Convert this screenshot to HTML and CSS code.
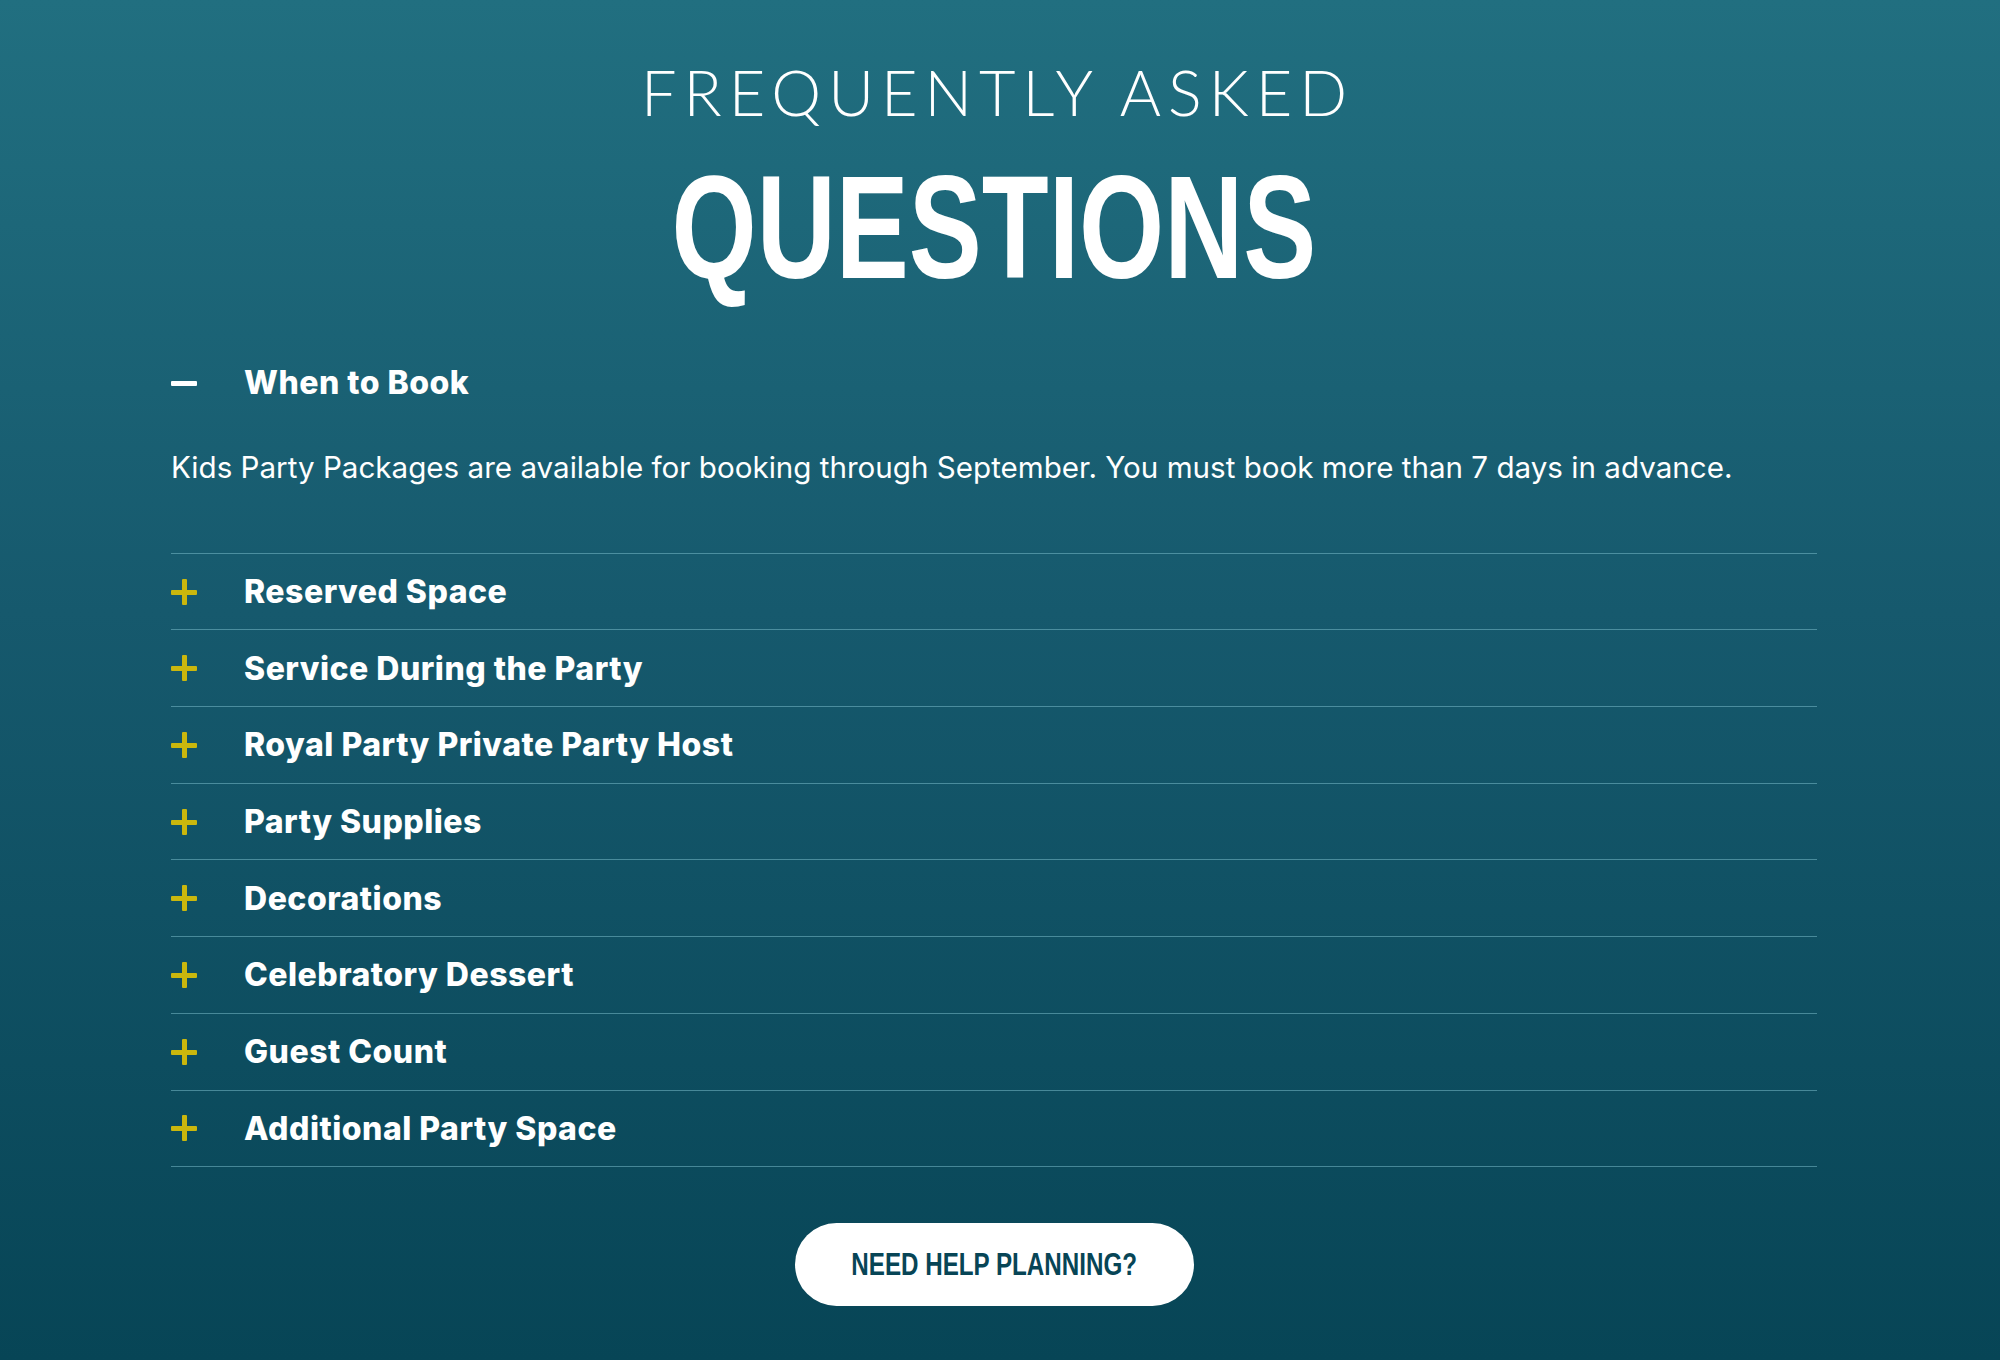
FILE: index.html
```html
<!DOCTYPE html>
<html lang="en">
<head>
    <meta charset="UTF-8">
    <meta name="viewport" content="width=device-width, initial-scale=1.0">
    <title>FAQ</title>
    <link rel="stylesheet" href="styles.css">
</head>
<body>
    <section class="faq">
        <h2 class="faq-title">
            <span class="faq-kicker">FREQUENTLY ASKED</span>
            <span class="faq-big"><span class="condensed">QUESTIONS</span></span>
        </h2>

        <div class="faq-list">
            <div class="faq-item open">
                <div class="faq-question">
                    <span class="faq-icon minus"></span>
                    <span class="faq-label">When to Book</span>
                </div>
                <p class="faq-answer">Kids Party Packages are available for booking through September. You must book more than 7 days in advance.</p>
            </div>
            <div class="faq-item">
                <div class="faq-question"><span class="faq-icon plus"></span><span class="faq-label">Reserved Space</span></div>
            </div>
            <div class="faq-item">
                <div class="faq-question"><span class="faq-icon plus"></span><span class="faq-label">Service During the Party</span></div>
            </div>
            <div class="faq-item">
                <div class="faq-question"><span class="faq-icon plus"></span><span class="faq-label">Royal Party Private Party Host</span></div>
            </div>
            <div class="faq-item">
                <div class="faq-question"><span class="faq-icon plus"></span><span class="faq-label">Party Supplies</span></div>
            </div>
            <div class="faq-item">
                <div class="faq-question"><span class="faq-icon plus"></span><span class="faq-label">Decorations</span></div>
            </div>
            <div class="faq-item">
                <div class="faq-question"><span class="faq-icon plus"></span><span class="faq-label">Celebratory Dessert</span></div>
            </div>
            <div class="faq-item">
                <div class="faq-question"><span class="faq-icon plus"></span><span class="faq-label">Guest Count</span></div>
            </div>
            <div class="faq-item">
                <div class="faq-question"><span class="faq-icon plus"></span><span class="faq-label">Additional Party Space</span></div>
            </div>
        </div>

        <div class="faq-cta">
            <a class="help-button" href="#"><span class="condensed">NEED HELP PLANNING?</span></a>
        </div>
    </section>
</body>
</html>
```

FILE: styles.css
```css
html, body {
    margin: 0;
    height: 100%;
}
body {
    font-family: Inter, 'Noto Sans', sans-serif;
    color: #fff;
    background: linear-gradient(180deg, #216f80 0%, #16596d 45%, #074556 100%);
    min-height: 1360px;
}
.faq {
    padding: 52px 183px 0 171px;
}
.faq-title {
    margin: 0;
    text-align: center;
    font-weight: normal;
}
.faq-kicker {
    display: block;
    font-family: Lato, 'Liberation Sans', sans-serif;
    font-weight: 300;
    font-size: 63px;
    line-height: 80px;
    letter-spacing: 7px;
    padding-left: 7px;
}
.faq-big {
    display: block;
    font-family: 'Liberation Sans', Arial, sans-serif;
    font-weight: 700;
    font-size: 146px;
    line-height: 150px;
    margin-top: 21px;
}
/* no condensed face installed, so squeeze the bold one */
.condensed {
    display: inline-block;
    transform: scaleX(0.75);
}
.faq-list {
    margin-top: 42px;
}
.faq-item {
    border-bottom: 1px solid rgba(120, 185, 200, 0.55);
}
.faq-question {
    display: flex;
    align-items: center;
    height: 75.7px;
}
.faq-label {
    font-weight: 800;
    font-size: 32px;
    letter-spacing: 0.5px;
    margin-left: 47px;
}
.faq-icon {
    position: relative;
    width: 26px;
    height: 26px;
    flex: none;
}
.faq-icon::before,
.faq-icon::after {
    content: '';
    position: absolute;
    background: #cab70d;
    border-radius: 1px;
}
.faq-icon::before {
    left: 0;
    right: 0;
    top: 11px;
    height: 5px;
}
.faq-icon::after {
    top: 0;
    bottom: 0;
    left: 11px;
    width: 5px;
}
.faq-icon.minus::before {
    background: #fff;
}
.faq-icon.minus::after {
    display: none;
}
.faq-answer {
    margin: 26px 0 0;
    padding-bottom: 66px;
    font-size: 29.6px;
    line-height: 40px;
}
.faq-cta {
    display: flex;
    justify-content: center;
    margin-top: 56px;
}
.help-button {
    display: flex;
    align-items: center;
    justify-content: center;
    width: 399px;
    height: 83px;
    border-radius: 42px;
    background: #fff;
    color: #074556;
    text-decoration: none;
    font-family: 'Liberation Sans', Arial, sans-serif;
    font-weight: 700;
    font-size: 31px;
}
.help-button .condensed {
    transform: scaleX(0.78);
}
```
